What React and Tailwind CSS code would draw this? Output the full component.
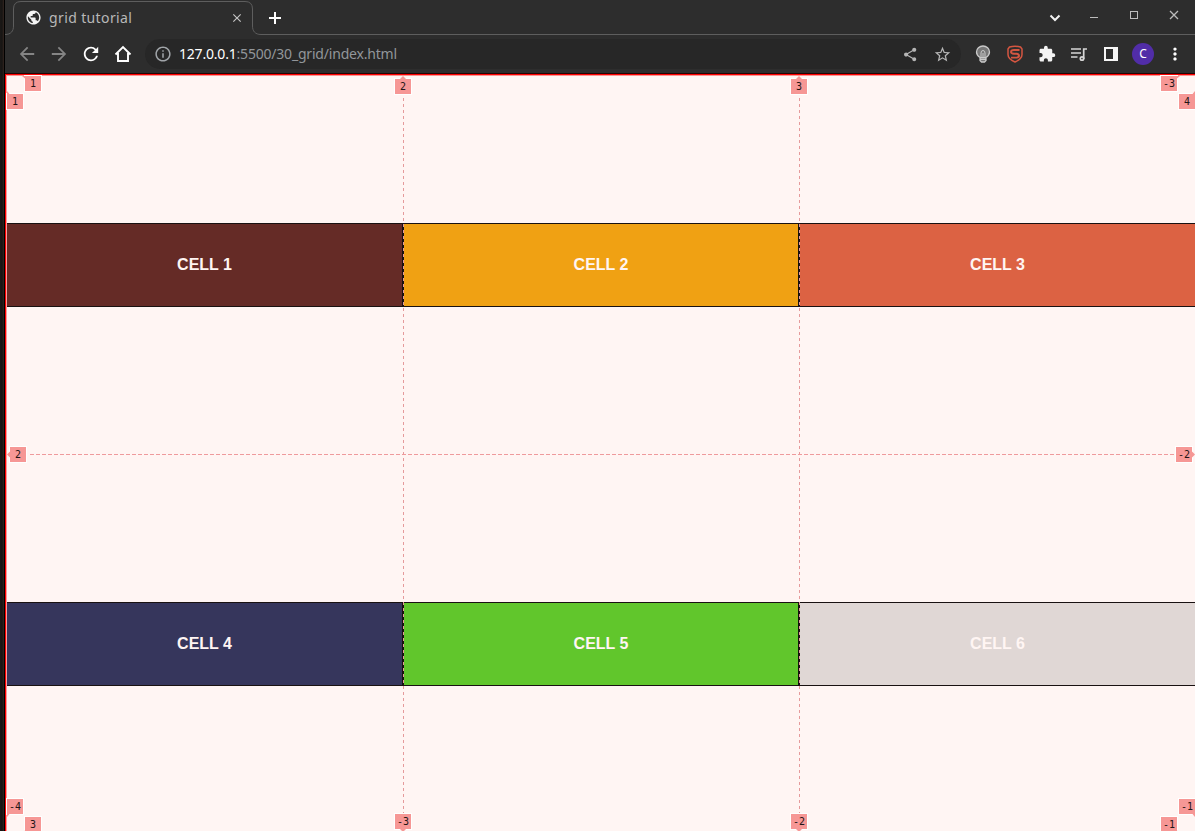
import React from "react";
import {
  MdArrowBack, MdArrowForward, MdRefresh, MdPublic, MdInfoOutline, MdShare,
  MdStarBorder, MdExtension, MdMoreVert, MdClose,
} from "react-icons/md";

const cells = [
  { name: "CELL 1", tone: "bg-[#652b26] border-r" },
  { name: "CELL 2", tone: "bg-[#f0a113] border-r pl-px" },
  { name: "CELL 3", tone: "bg-[#dc6243] pl-px" },
  { name: "CELL 4", tone: "bg-[#36365c] border-r" },
  { name: "CELL 5", tone: "bg-[#61c62c] border-r pl-px" },
  { name: "CELL 6", tone: "bg-[#e0d7d5] pl-px" },
];

/* Grid line numbers: position inside the viewport and the tip that points at the line. */
const markers = [
  { n: "1", at: "left-[18px] top-px", tip: "M-3 0H3V5Z" },
  { n: "1", at: "left-0 top-[19px]", tip: "M0 -3V3H5Z" },
  { n: "2", at: "left-[388px] top-[4px]", tip: "M5 0L8 -3L11 0Z" },
  { n: "3", at: "left-[784px] top-[4px]", tip: "M5 0L8 -3L11 0Z" },
  { n: "-3", at: "left-[1154px] top-px", tip: "M19 0H13V5Z" },
  { n: "4", at: "left-[1172px] top-[19px]", tip: "M16 -3V3H11Z" },
  { n: "2", at: "left-[3px] top-[372px]", tip: "M0 4.500L-3 7.500L0 10.500Z" },
  { n: "-2", at: "left-[1169px] top-[372px]", tip: "M16 4.500L19 7.500L16 10.500Z" },
  { n: "-4", at: "left-0 top-[724px]", tip: "M0 18V12H5Z" },
  { n: "3", at: "left-[18px] top-[742px]", tip: "M-3 16H3V11Z" },
  { n: "-3", at: "left-[388px] top-[739px]", tip: "M5 15L8 18L11 15Z" },
  { n: "-2", at: "left-[784px] top-[739px]", tip: "M5 15L8 18L11 15Z" },
  { n: "-1", at: "left-[1172px] top-[724px]", tip: "M16 18V12H11Z" },
  { n: "-1", at: "left-[1154px] top-[742px]", tip: "M19 16H13V11Z" },
];

function Marker({ n, at, tip }) {
  return (
    <div className={`absolute h-[15px] w-4 bg-[#f69795] text-center font-['DejaVu_Sans_Mono',monospace] text-[10px] leading-[15px] text-[#221515] outline outline-white ${at}`}>
      <svg className="absolute left-0 top-0 overflow-visible" width="16" height="15">
        <path d={tip} fill="#f69795" />
      </svg>
      <span className="relative">{n}</span>
    </div>
  );
}

function TabStrip() {
  return (
    <div className="relative flex h-[35px] items-start">
      <svg className="absolute left-0 top-0" width="1190" height="35" fill="none" stroke="#5e5e5e">
        <path d="M0 34.5C6 34.5 8.5 31 8.5 26V9Q8.500 1.500 16 1.500H240Q247.500 1.500 247.500 9V26C247.500 31 250 34.500 256 34.500H1190" />
      </svg>
      <div className="relative flex h-[35px] w-[248px] items-center pl-5 pr-[9px]">
        <MdPublic className="size-[17px] text-[#f4f4f4]" />
        <span className="-mt-px ml-[7px] whitespace-nowrap text-[14px] tracking-[0.38px] text-[#b8b8b8]">grid tutorial</span>
        <MdClose className="ml-auto size-[14px] text-[#c5c5c5]" />
      </div>
      <svg className="relative ml-[15px] mt-[11px]" width="14" height="14" fill="none" stroke="white" strokeWidth="2">
        <path d="M1 7H13M7 1V13" />
      </svg>
      <svg className="relative ml-auto mr-[13px] mt-2" width="134" height="18" fill="none">
        <path d="M2.500 7.500L7 12L11.500 7.500" stroke="#f2f2f2" strokeWidth="2" />
        <path d="M42 9.500H50" stroke="#bcbcbc" />
        <rect x="82.500" y="3.500" width="7" height="7" stroke="#bcbcbc" />
        <path d="M122 3L130 11M130 3L122 11" stroke="#bcbcbc" strokeWidth="1.300" />
      </svg>
    </div>
  );
}

function Toolbar() {
  return (
    <div className="flex h-[38px] items-center pr-[11px]">
      <div className="flex items-center gap-[14px] pl-[13px]">
        <MdArrowBack className="size-[18px] text-[#858585]" viewBox="2 2 20 20" />
        <MdArrowForward className="size-[18px] text-[#858585]" viewBox="2 2 20 20" />
        <MdRefresh className="size-[18px] text-white" viewBox="2 2 20 20" />
        <svg className="size-[18px]" viewBox="0 0 18 18" fill="none" stroke="white" strokeWidth="1.900">
          <path d="M1.500 9.500L9 2L16.500 9.500M4 8V16H14V8" />
        </svg>
      </div>
      <div className="ml-[13px] flex h-[30px] w-[816px] shrink-0 items-center rounded-full bg-[#272727] pl-[10px] pr-[10px]">
        <MdInfoOutline className="size-4 text-[#a0a4a8]" viewBox="1.500 1.500 21 21" />
        <span className="-mt-[2px] ml-2 whitespace-nowrap text-[14px] tracking-[-0.2px] text-[#92969a]"><span className="text-white">127.0.0.1</span>:5500/30_grid/index.html</span>
        <MdShare className="ml-auto size-[15px] text-[#b5b5b5]" viewBox="1.500 1 22 22" />
        <MdStarBorder className="ml-4 size-[17px] text-[#b5b5b5]" viewBox="1 1 22 22" />
      </div>
      <div className="ml-[13px] flex items-center gap-[14px]">
        <svg className="size-[18px]" viewBox="0 0 18 18" fill="none" stroke="#c9c9c9">
          <path d="M6 12.500Q2.500 10 2.500 7A6.500 6 0 0 1 15.500 7Q15.500 10 12 12.500V15.500L10.500 17H7.500L6 15.500Z" fill="#777" strokeWidth="1.300" />
          <path d="M7 15V8Q7 5.500 9 5.500T11 8V15M9 8V15M6 12.500H12M6 14.500H12" />
        </svg>
        <svg className="size-[18px]" viewBox="0 0 18 18" fill="none" stroke="#d55641">
          <path d="M3.500 2Q9 .5 14.500 2L16 4V9.500C16 13 13.500 15 9 17C4.500 15 2 13 2 9.500V4Z" strokeWidth="1.500" />
          <path d="M13.500 5H8Q5 5 5 7Q5 8.500 8 8.700H10.500Q13 9 13 10.800Q13 12.500 10.500 12.600H5" strokeWidth="1.900" />
        </svg>
        <MdExtension className="size-[18px] text-[#f3f3f3]" viewBox="0 0 24 24" />
        <svg className="size-[18px]" viewBox="0 0 18 18" fill="none" stroke="#d5d5d5" strokeWidth="1.700">
          <path d="M1 4H11M1 8H11M1 12H7.500M13.700 14V4H17" />
          <circle cx="12" cy="13.500" r="1.700" />
        </svg>
        <svg className="size-[18px]" viewBox="0 0 18 18">
          <path fill="#f5f5f5" fillRule="evenodd" d="M2 2H16V16H2ZM4 4V14H11V4Z" />
        </svg>
        <div className="-mx-[2px] flex size-[22px] items-center justify-center rounded-full bg-[#512da8] text-[12px] text-white">C</div>
        <MdMoreVert className="size-[18px] text-white" viewBox="1 1 22 22" />
      </div>
    </div>
  );
}

export default function App() {
  return (
    <div className="flex h-[831px] w-[1195px] overflow-hidden bg-[#2d2d2d] font-['Noto_Sans',sans-serif]">
      <div className="w-[5px] shrink-0 border-r border-black bg-gradient-to-r from-[#1b1816] via-[#171514] to-[#33251f]" />
      <div className="flex w-[1190px] shrink-0 flex-col">
        <TabStrip />
        <Toolbar />
        <div className="h-[758px] border-t border-[#250505] bg-[#fff5f3]">
          <div className="h-full border-l border-t border-[#fe0000]">
            <main className="relative h-[756px] w-[1189px] border-l border-[#ff9a9a]">
              <div className="grid grid-cols-[396px_396px_396px] grid-rows-[379px_379px] items-center">
                {cells.map((cell) => (
                  <div key={cell.name} className={`flex h-[84px] items-center justify-center border-y border-[#191111] pt-px font-['Liberation_Sans',Arial,sans-serif] text-base font-bold text-[#fff5f3] ${cell.tone}`}>
                    {cell.name}
                  </div>
                ))}
              </div>
              <div className="absolute left-0 top-0 h-px w-full bg-[#f69795]" />
              {/* Column edges under the dashed grid lines */}
              <div className="absolute left-[396px] top-[148px] h-[84px] w-px bg-[#191111]" />
              <div className="absolute left-[792px] top-[148px] h-[84px] w-px bg-[#191111]" />
              <div className="absolute left-[396px] top-[527px] h-[84px] w-px bg-[#191111]" />
              <div className="absolute left-[792px] top-[527px] h-[84px] w-px bg-[#191111]" />
              <div className="absolute left-[396px] top-[23px] h-[715px] w-px bg-[repeating-linear-gradient(to_bottom,#e59a9b_0_3px,transparent_3px_6px)]" />
              <div className="absolute left-[792px] top-[23px] h-[715px] w-px bg-[repeating-linear-gradient(to_bottom,#e59a9b_0_3px,transparent_3px_6px)]" />
              <div className="absolute left-[23px] top-[379px] h-px w-[1144px] bg-[repeating-linear-gradient(to_right,#ef9a9c_0_4px,transparent_4px_6px)]" />
              {markers.map((marker) => (
                <Marker key={marker.at} {...marker} />
              ))}
            </main>
          </div>
        </div>
      </div>
    </div>
  );
}
